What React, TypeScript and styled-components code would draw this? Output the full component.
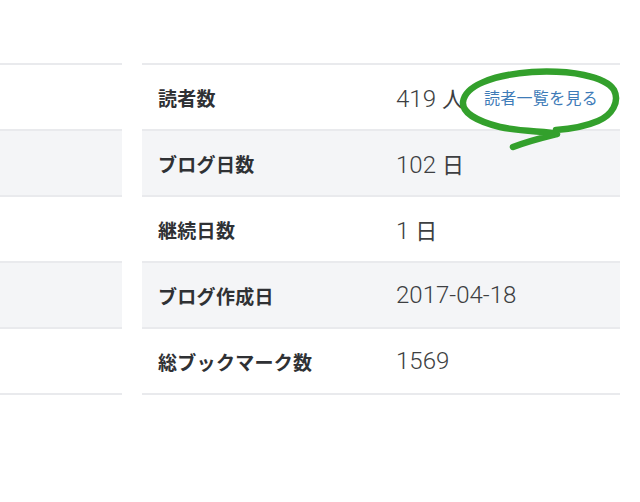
import React from "react";
import styled, { createGlobalStyle } from "styled-components";

const Global = createGlobalStyle`
  html, body { margin: 0; padding: 0; background: #ffffff; }
  body { font-family: "Noto Sans CJK JP", "Noto Sans", sans-serif; }
`;

const Page = styled.div`
  position: relative;
  width: 640px;
  height: 502px;
  padding-top: 63px;
  box-sizing: border-box;
  display: flex;
  gap: 20px;
  overflow: hidden;
`;

const Panel = styled.div<{ $width: number }>`
  width: ${(p) => p.$width}px;
  flex: none;
  border-top: 2px solid #e9eaed;
`;

const Row = styled.div<{ $shade: boolean }>`
  height: 64px;
  border-bottom: 2px solid #e9eaed;
  background: ${(p) => (p.$shade ? "#f4f5f7" : "#ffffff")};
  display: flex;
  align-items: center;
`;

const Label = styled.div`
  width: 238px;
  padding-left: 16px;
  flex: none;
  font-family: "Noto Sans CJK JP", sans-serif;
  font-weight: 700;
  font-size: 19px;
  letter-spacing: 0.3px;
  color: #2f3134;
`;

const Value = styled.div`
  display: flex;
  align-items: center;
  gap: 20px;
  font-family: Roboto, "Noto Sans CJK JP", sans-serif;
  font-weight: 300;
  font-size: 24px;
  color: #3d3f42;
`;

const Unit = styled.span`
  font-family: "Noto Sans CJK JP", sans-serif;
  font-weight: 400;
  font-size: 22px;
  margin-left: 6px;
`;

const Link = styled.a`
  font-family: "Noto Sans CJK JP", sans-serif;
  font-size: 16px;
  font-weight: 400;
  color: #3f7cb8;
  text-decoration: none;
  letter-spacing: 0.3px;
`;

const Annotation = styled.svg`
  position: absolute;
  left: 0;
  top: 0;
  pointer-events: none;
`;

type Item = { label: string; value: string; unit?: string; link?: string };

const items: Item[] = [
  { label: "読者数", value: "419", unit: "人", link: "読者一覧を見る" },
  { label: "ブログ日数", value: "102", unit: "日" },
  { label: "継続日数", value: "1", unit: "日" },
  { label: "ブログ作成日", value: "2017-04-18" },
  { label: "総ブックマーク数", value: "1569" },
];

export default function App() {
  return (
    <>
      <Global />
      <Page>
        <Panel $width={122}>
          {items.map((_, i) => (
            <Row key={i} $shade={i % 2 === 1} />
          ))}
        </Panel>
        <Panel $width={478}>
          {items.map((it, i) => (
            <Row key={it.label} $shade={i % 2 === 1}>
              <Label>{it.label}</Label>
              <Value>
                <span>
                  {it.value}
                  {it.unit && <Unit>{it.unit}</Unit>}
                </span>
                {it.link && <Link href="#">{it.link}</Link>}
              </Value>
            </Row>
          ))}
        </Panel>
        <Annotation width="640" height="502" viewBox="0 0 640 502">
          <path
            d="M513 147 C 528 141, 545 137, 557 134 C 548 131, 522 132, 500 127 C 476 121, 462 112, 463 102 C 465 86, 492 75, 532 72 C 570 70, 605 76, 614 90 C 620 102, 612 115, 598 121 C 584 127, 570 129, 556 130"
            fill="none"
            stroke="#33a02c"
            strokeWidth="6.5"
            strokeLinecap="round"
            strokeLinejoin="round"
          />
        </Annotation>
      </Page>
    </>
  );
}
